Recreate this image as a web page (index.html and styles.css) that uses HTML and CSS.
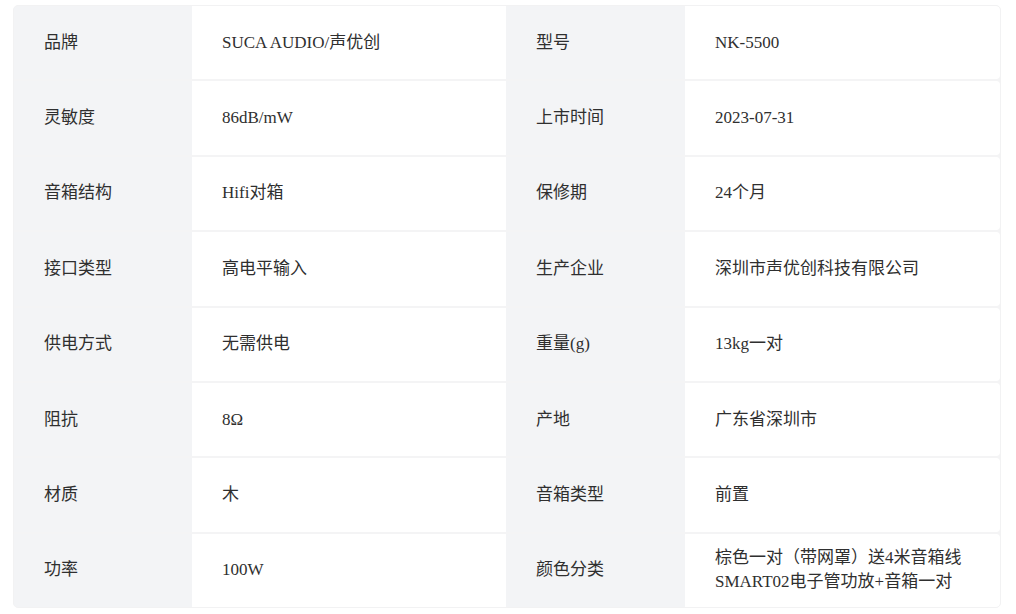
FILE: index.html
```html
<!DOCTYPE html>
<html lang="zh-CN">
<head>
<meta charset="utf-8">
<title>参数</title>
<link rel="stylesheet" href="styles.css">
</head>
<body>
<div class="specs">
  <div class="cell label">品牌</div><div class="cell value">SUCA AUDIO/声优创</div><div class="cell label">型号</div><div class="cell value last">NK-5500</div>
  <div class="cell label">灵敏度</div><div class="cell value">86dB/mW</div><div class="cell label">上市时间</div><div class="cell value last">2023-07-31</div>
  <div class="cell label">音箱结构</div><div class="cell value">Hifi对箱</div><div class="cell label">保修期</div><div class="cell value last">24个月</div>
  <div class="cell label">接口类型</div><div class="cell value">高电平输入</div><div class="cell label">生产企业</div><div class="cell value last">深圳市声优创科技有限公司</div>
  <div class="cell label">供电方式</div><div class="cell value">无需供电</div><div class="cell label">重量(g)</div><div class="cell value last">13kg一对</div>
  <div class="cell label">阻抗</div><div class="cell value">8Ω</div><div class="cell label">产地</div><div class="cell value last">广东省深圳市</div>
  <div class="cell label">材质</div><div class="cell value">木</div><div class="cell label">音箱类型</div><div class="cell value last">前置</div>
  <div class="cell label">功率</div><div class="cell value">100W</div><div class="cell label">颜色分类</div><div class="cell value last">棕色一对（带网罩）送4米音箱线<br>SMART02电子管功放+音箱一对</div>
</div>
</body>
</html>
```

FILE: styles.css
```css
html, body {
  margin: 0;
  padding: 0;
  background: #ffffff;
}
body {
  padding: 5px 15px 0 13px;
  font-family: "Liberation Serif", "Noto Sans CJK SC", serif;
  font-size: 17px;
  color: #2f2f2f;
}
.specs {
  display: grid;
  grid-template-columns: 178px 314px 179px 315px;
  grid-template-rows: repeat(8, 1fr);
  row-gap: 2px;
  width: 988px;
  height: 603px;
  box-sizing: border-box;
  background: #f4f4f5;
  border: 1px solid #f2f2f3;
  border-radius: 5px;
  overflow: hidden;
}
.cell {
  display: flex;
  align-items: center;
  padding-left: 30px;
  line-height: 24px;
}
.label {
  background: #f3f4f6;
}
.value {
  background: #ffffff;
}
.value.last {
  border-radius: 0 4px 4px 0;
}
```
